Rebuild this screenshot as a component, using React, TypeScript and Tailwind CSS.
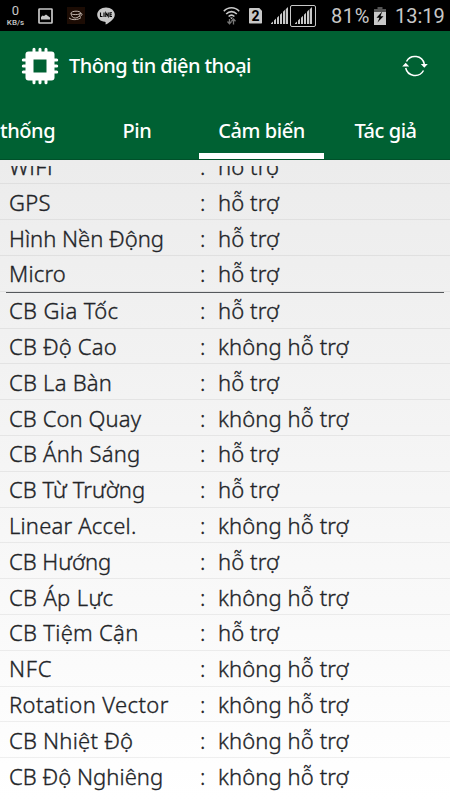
import clsx from 'clsx';

interface Sensor {
  name: string;
  supported: boolean;
  spacing?: string;
}

const FEATURES: Sensor[] = [
  { name: 'WiFi', supported: true, spacing: 'tracking-[0.7px]' },
  { name: 'GPS', supported: true, spacing: 'tracking-[0.3px]' },
  { name: 'Hình Nền Động', supported: true },
  { name: 'Micro', supported: true, spacing: 'tracking-[0.2px]' },
];

const SENSORS: Sensor[] = [
  { name: 'CB Gia Tốc', supported: true, spacing: 'tracking-[0.4px]' },
  { name: 'CB Độ Cao', supported: false, spacing: 'tracking-[0.2px]' },
  { name: 'CB La Bàn', supported: true, spacing: 'tracking-[0.25px]' },
  { name: 'CB Con Quay', supported: false, spacing: 'tracking-[0.1px]' },
  { name: 'CB Ánh Sáng', supported: true, spacing: 'tracking-[0.25px]' },
  { name: 'CB Từ Trường', supported: true, spacing: 'tracking-[0.05px]' },
  { name: 'Linear Accel.', supported: false, spacing: 'tracking-[0.2px]' },
  { name: 'CB Hướng', supported: true },
  { name: 'CB Áp Lực', supported: false, spacing: 'tracking-[0.35px]' },
  { name: 'CB Tiệm Cận', supported: true, spacing: 'tracking-[0.3px]' },
  { name: 'NFC', supported: false, spacing: 'tracking-[0.8px]' },
  { name: 'Rotation Vector', supported: false, spacing: 'tracking-[0.38px]' },
  { name: 'CB Nhiệt Độ', supported: false, spacing: 'tracking-[0.25px]' },
  { name: 'CB Độ Nghiêng', supported: false, spacing: 'tracking-[0.05px]' },
];

function SignalBars() {
  return (
    <svg width="17" height="17" viewBox="0 0 17 17" fill="#c8c8c8">
      <path d="M0 17v-.8l2-1.700V17zM3 17v-3.500l2-2V17zM6 17v-6.300l2-2V17zM9 17V7.800l2-2V17zM12 17V4.800l2-2V17zM14.700 17V2.200L17 0v17z" />
    </svg>
  );
}

function StatusBar() {
  return (
    <div className="flex h-[31px] shrink-0 items-center bg-black font-['Roboto',sans-serif] text-[#c8c8c8]">
      <div className="ml-[5px] flex w-[21px] flex-col items-center">
        <span className="text-[13px] leading-[14px]">0</span>
        <span className="text-[8px] font-medium leading-[9px]">KB/s</span>
      </div>
      {/* Gallery */}
      <svg className="ml-3" width="15" height="16" viewBox="0 0 15 16" fill="none">
        <rect x="1" y="1" width="13" height="14" rx="0.5" stroke="#c8c8c8" strokeWidth="1.7" />
        <path d="M3 11.500V9l1.500-1.500 1.500.5L8 6.500 10 8l2 1.500v2z" fill="#c8c8c8" />
      </svg>
      {/* Coffee cup */}
      <svg className="ml-[14px]" width="18" height="17" viewBox="0 0 18 17" fill="none">
        <path d="M0 0h18v17H0z" fill="#1c0c04" />
        <path d="M4 6.200c0-1.200 2.400-2 5-2s4.500.6 4.500 1.600-2 1.800-4.700 1.800S4 7.300 4 6.200z" stroke="#c4b8b0" strokeWidth="1" />
        <path d="M4 6.500c.4 3 2 4.500 4.200 4.500 2.600 0 4.600-1.800 5.200-4.600M13.200 6.500c1.800-.4 2.300.8 1.300 1.900-.8.9-1.900 1.200-2.700 1.200M2 10.800c2 2.600 9.500 2.400 12-.3" stroke="#c4b8b0" strokeWidth="1" />
      </svg>
      {/* LINE */}
      <svg className="ml-[12px]" width="18" height="18" viewBox="0 0 18 18">
        <path d="M9 0.500c4.900 0 8.800 3.200 8.800 7.200 0 2.500-1.700 4.600-4 6.500-2 1.600-3.800 2.700-4.600 3.100-.8.300-.7-.2-.6-.8.200-1 .1-1.500-.7-1.700C3.500 14.400.2 11.400.2 7.700.2 3.700 4.100.5 9 .5z" fill="#c8c8c8" />
        <path d="M3.500 5.500v4h2M7 5.500v4.500M8.800 10V5.800l2.400 3.700V5.500M15 5.800h-2v3.700h2M13 7.700h1.800" stroke="#000" strokeWidth="1.100" fill="none" />
      </svg>

      <div className="ml-auto flex items-center">
        {/* Wi-Fi with traffic arrows */}
        <svg width="17" height="20" viewBox="0 0 17 20" fill="none">
          <path d="M.8 5.300c4.400-4.700 11-4.700 15.400 0M3.200 8c3.100-3.200 7.500-3.200 10.600 0M5.600 10.500c1.700-1.600 4.100-1.600 5.800 0" stroke="#c8c8c8" strokeWidth="1.600" />
          <path d="M7 11.500h3l-1.500 1.700z" fill="#c8c8c8" />
          <path d="M6.500 13v5M4.500 15.500l2 2.200 2-2.200M10.500 18.500v-5M8.500 15.200l2-2.200 2 2.200" stroke="#777" strokeWidth="1.300" />
        </svg>
        <div className="ml-[9px] flex h-[16px] w-[13px] items-center justify-center rounded-[1px] bg-[#c8c8c8] text-[14px] font-bold leading-none text-black [clip-path:polygon(0_0,75%_0,100%_20%,100%_100%,0_100%)]">
          2
        </div>
        <div className="ml-[9px]">
          <SignalBars />
        </div>
        <div className="ml-[2px] flex h-[22px] w-[26px] items-center justify-end rounded-[2px] border border-[#c8c8c8] pr-[3px]">
          <SignalBars />
        </div>
        <span className="ml-[15px] w-[43px] whitespace-nowrap text-[20px] leading-none tracking-[0.6px]">81%</span>
        <svg width="12" height="18" viewBox="0 0 12 18">
          <path d="M3.500 0h5v2H12v3H0V2h3.500z" fill="#555" />
          <path d="M0 5h12v13H0z" fill="#c8c8c8" />
          <path d="M8.200 4.500L2.500 10.700h3L3.500 15.500l6-6.300h-3z" fill="#000" />
        </svg>
        <span className="mr-[5px] ml-[9px] w-[50px] whitespace-nowrap text-[20px] leading-none">13:19</span>
      </div>
    </div>
  );
}

function Header() {
  return (
    <header className="flex h-[70px] shrink-0 items-center bg-[#006133] text-white">
      <svg className="ml-[21px]" width="38" height="38" viewBox="0 0 38 38">
        <path
          d="M13 2.300v33.400M19 2.300v33.400M25 2.300v33.400M2.300 13h33.400M2.300 19h33.400M2.300 25h33.400"
          stroke="#fff"
          strokeWidth="3"
          strokeLinecap="round"
        />
        <rect x="4.500" y="4.500" width="29" height="29" rx="3" fill="#fff" />
        <path d="M12.500 12.500h13v13h-13z" fill="#006133" />
      </svg>
      <h1 className="ml-[10px] whitespace-nowrap text-[20px] font-medium leading-none tracking-[-0.57px]">
        Thông tin điện thoại
      </h1>
      {/* Refresh */}
      <svg className="mr-[22px] ml-auto" width="26" height="24" viewBox="0 0 26 24" fill="none">
        <path d="M4.500 7.500A9.600 9.600 0 0 1 22.300 10M21.500 16.500A9.600 9.600 0 0 1 3.700 14" stroke="#fff" strokeWidth="1.500" />
        <path d="M18.800 10h7L22.300 13.700zM.2 12.500h7L3.700 8.800z" fill="#fff" />
      </svg>
    </header>
  );
}

function Tabs() {
  return (
    <nav className="flex h-[59px] shrink-0 overflow-hidden border-b border-[#00502a] bg-[#006133] text-[20px] font-medium leading-[60px] tracking-[-0.45px] whitespace-nowrap text-white">
      <div className="w-[75px]">thống</div>
      <div className="w-[124px] text-center">Pin</div>
      <div className="-mb-px w-[125px] border-b-[7px] border-white text-center">Cảm biến</div>
      <div className="w-[123px] text-center">Tác giả</div>
    </nav>
  );
}

function SensorRow({ sensor, last }: { sensor: Sensor; last?: boolean }) {
  return (
    <div className={clsx('flex h-[35.8px] shrink-0 items-center border-b', last ? 'border-transparent' : 'border-black/6')}>
      <span className={clsx('w-[200px] pl-[9px]', sensor.spacing)}>{sensor.name}</span>
      <span className="w-[18px]">:</span>
      <span className="tracking-[0.1px]">{sensor.supported ? 'hỗ trợ' : 'không hỗ trợ'}</span>
    </div>
  );
}

export default function App() {
  return (
    <div className="flex h-[800px] w-[450px] flex-col overflow-hidden font-['Noto_Sans',sans-serif]">
      <StatusBar />
      <Header />
      <Tabs />
      <main className="flex min-h-0 flex-1 flex-col bg-linear-to-b from-[#ececec] to-white py-[6px]">
        <div className="flex min-h-0 flex-1 flex-col justify-end overflow-hidden whitespace-nowrap text-[22px] font-light leading-none text-[#222428] [-webkit-text-stroke:0.35px_#222428]">
          {FEATURES.map((s) => (
            <SensorRow key={s.name} sensor={s} />
          ))}
          <div className="mx-[6px] h-px shrink-0 bg-[#55585c]" />
          {SENSORS.map((s, i) => (
            <SensorRow key={s.name} sensor={s} last={i === SENSORS.length - 1} />
          ))}
        </div>
      </main>
    </div>
  );
}
